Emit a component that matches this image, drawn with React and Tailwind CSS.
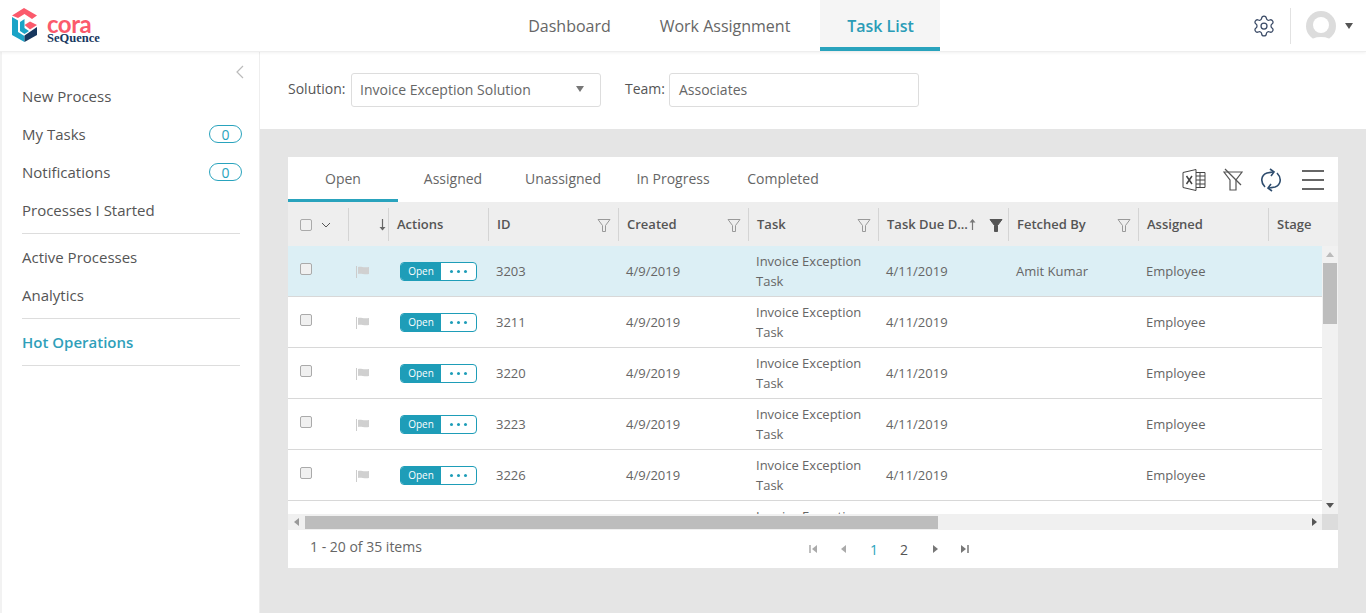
import { Settings } from "lucide-react";

const sideTop = [
  { label: "New Process" },
  { label: "My Tasks", badge: 0 },
  { label: "Notifications", badge: 0 },
  { label: "Processes I Started" },
];

const columns = [
  { label: "ID", width: "w-[130px]" },
  { label: "Created", width: "w-[130px]" },
  { label: "Task", width: "w-[130px]" },
  { label: "Task Due D...", width: "w-[130px]", sorted: true },
  { label: "Fetched By", width: "w-[130px]" },
  { label: "Assigned", width: "w-[130px]", noFilter: true },
  { label: "Stage", width: "w-[53px]", noFilter: true, last: true },
];

const rows = [
  { id: "3203", fetched: "Amit Kumar", selected: true },
  { id: "3211" },
  { id: "3220" },
  { id: "3223" },
  { id: "3226" },
  { id: "3229" },
];

function Logo() {
  return (
    <div className="flex items-center ml-3 gap-[10px]">
      <svg width="25" height="34" viewBox="0 0 25 34" className="mb-[2px]">
        <path d="M0 7.5 L12 0 L25 7.5 L20 11 L12.5 6 L6 10 Z" fill="#fb5a6c" />
        <path d="M0 9 L6 12.5 L6 24 L12.5 28 L12.5 34 L0 27 Z" fill="#1ba3c6" />
        <path d="M12.5 27.5 L25 19 L25 27 L12.5 34 Z" fill="#17375e" />
        <path d="M12.5 17 L18 13.5 L25 17 L18 21.5 Z" fill="#fb5a6c" />
        <path d="M12.5 20 L17 23 L12.5 26 L8 23 L8 14 L12.5 11 Z" fill="#1ba3c6" />
      </svg>
      <div className="flex flex-col pt-[9px]">
        <span className="font-['Lato',sans-serif] font-bold text-[24px] tracking-[-0.5px] leading-[16px] text-[#fb5a6c]">cora</span>
        <span className="font-['Liberation_Serif',serif] font-bold text-[12.5px] leading-[13px] text-[#17375e]">SeQuence</span>
      </div>
    </div>
  );
}

function Avatar() {
  return (
    <svg width="30" height="30" viewBox="0 0 30 30" className="ml-[15px]">
      <circle cx="15" cy="15" r="15" fill="#dcdcdc" />
      <circle cx="15" cy="14" r="8" fill="#fff" />
      <ellipse cx="15" cy="31" rx="11" ry="5" fill="#fff" />
    </svg>
  );
}

function Funnel({ filled }) {
  return (
    <svg width="14" height="15" viewBox="0 0 14 15">
      <path
        d="M1 1.5 H13 L8.5 7.5 V13.5 H5.5 V7.5 Z"
        fill={filled ? "#555" : "none"}
        stroke={filled ? "#555" : "#999"}
        strokeWidth="1"
      />
    </svg>
  );
}

function Flag() {
  return (
    <svg width="14" height="12" viewBox="0 0 14 12">
      <path d="M0.5 0 V12" stroke="#ccc" strokeWidth="1" />
      <path d="M2 1 C5 0 7 2 13 1 V8 C8 9 5 7 2 8 Z" fill="#d0d0d0" />
    </svg>
  );
}

function Checkbox() {
  return <span className="block w-[12px] h-[12px] rounded-[2px] border border-[#aaa] bg-[#f0f0f0]" />;
}

function Caret({ dir, color = "#777" }) {
  const d = { left: "M6 0 V8 L1 4 Z", right: "M1 0 V8 L6 4 Z" }[dir];
  return (
    <svg width="7" height="8" viewBox="0 0 7 8">
      <path d={d} fill={color} />
    </svg>
  );
}

function EdgeCaret({ dir, color }) {
  return (
    <svg width="9" height="8" viewBox="0 0 9 8">
      {dir === "left" ? (
        <>
          <path d="M1 0 V8" stroke={color} strokeWidth="1.5" />
          <path d="M8 0 V8 L3 4 Z" fill={color} />
        </>
      ) : (
        <>
          <path d="M8 0 V8" stroke={color} strokeWidth="1.5" />
          <path d="M1 0 V8 L6 4 Z" fill={color} />
        </>
      )}
    </svg>
  );
}

function ToolIcons() {
  return (
    <div className="flex items-center gap-[17px] pr-[14px]">
      <svg width="24" height="24" viewBox="0 0 24 24" fill="none" stroke="#444" strokeWidth="1">
        <path d="M1 4.5 L14 1.5 V22.5 L1 19.5 Z" />
        <path d="M14 4.5 H23 V19.5 H14 M14 8 H23 M14 12 H23 M14 16 H23 M18 4.5 V19.5" />
        <path d="M4.5 8 L10 16 M10 8 L4.5 16" strokeWidth="1.5" />
      </svg>
      <svg width="20" height="24" viewBox="0 0 20 24" fill="none" stroke="#555" strokeWidth="1.2">
        <path d="M1 4 H19 L13 12 V22 H7 V12 Z" />
        <path d="M2 1 L18 17" stroke="#555" />
      </svg>
      <svg width="22" height="24" viewBox="0 0 22 24" fill="none" stroke="#2f4d6e" strokeWidth="1.6">
        <path d="M5 19 C0 14 1 7 7 5 L13 4" />
        <path d="M10 1 L14 4 L11 8" />
        <path d="M17 5 C22 10 21 17 15 19 L9 20" />
        <path d="M12 23 L8 20 L11 16" />
      </svg>
      <div className="ml-[3px] flex flex-col gap-[7px] w-[22px]">
        <span className="block h-[2px] bg-[#666]" />
        <span className="block h-[2px] bg-[#666]" />
        <span className="block h-[2px] bg-[#666]" />
      </div>
    </div>
  );
}

function HeaderCell({ col }) {
  return (
    <div className={`${col.width} shrink-0 h-full py-[5px]`}>
      <div className={`h-full flex items-center pl-2 ${col.sorted ? "pr-[5px]" : "pr-[7px]"} ${col.last ? "" : "border-r border-[#d4d4d4]"}`}>
        <span className="font-semibold text-[13px] text-[#555] whitespace-nowrap">{col.label}</span>
        {col.sorted && (
          <svg width="7" height="11" viewBox="0 0 7 11" className="ml-[1px]">
            <path d="M3.5 2 V11" stroke="#777" strokeWidth="1.2" />
            <path d="M0.5 3.5 H6.5 L3.5 0 Z" fill="#777" />
          </svg>
        )}
        {!col.noFilter && (
          <span className="ml-auto pt-[2px]">
            <Funnel filled={col.sorted} />
          </span>
        )}
      </div>
    </div>
  );
}

function Row({ row }) {
  return (
    <div
      className={`flex h-[51px] shrink-0 items-center border-b border-[#d8d8d8] text-[13px] text-[#666] ${
        row.selected ? "bg-[#dceff5]" : "bg-white"
      }`}
    >
      <div className="w-[60px] shrink-0 pl-3 pb-[4px]">
        <Checkbox />
      </div>
      <div className="w-[40px] shrink-0 pl-[8px] pt-[2px]">
        <Flag />
      </div>
      <div className="w-[100px] shrink-0 pl-3">
        <div className="flex w-[77px] h-[19px] rounded-[4px] border border-[#1e9db8] overflow-hidden bg-white">
          <span className="w-[40px] bg-[#1e9db8] text-white text-[10px] font-medium flex items-center justify-center">
            Open
          </span>
          <span className="flex-1 flex items-center justify-center gap-[4px]">
            <i className="w-[3px] h-[3px] rounded-full bg-[#1e9db8]" />
            <i className="w-[3px] h-[3px] rounded-full bg-[#1e9db8]" />
            <i className="w-[3px] h-[3px] rounded-full bg-[#1e9db8]" />
          </span>
        </div>
      </div>
      <div className="w-[130px] shrink-0 pl-2 pt-[2px]">{row.id}</div>
      <div className="w-[130px] shrink-0 pl-2 pt-[2px]">4/9/2019</div>
      <div className="w-[130px] shrink-0 pl-2 leading-[20px]">Invoice Exception Task</div>
      <div className="w-[130px] shrink-0 pl-2 pt-[2px]">4/11/2019</div>
      <div className="w-[130px] shrink-0 pl-2 pt-[2px]">{row.fetched}</div>
      <div className="w-[130px] shrink-0 pl-2 pt-[2px]">Employee</div>
    </div>
  );
}

export default function App() {
  return (
    <div className="h-[613px] w-[1366px] overflow-hidden flex flex-col bg-[#e5e5e5] font-['Open_Sans',sans-serif]">
      {/* Top nav */}
      <header className="h-[52px] shrink-0 bg-white flex items-center border-b border-[#eee] shadow-[0_1px_3px_rgba(0,0,0,0.06)] relative z-10">
        <div className="w-[500px] shrink-0">
          <Logo />
        </div>
        <nav className="flex h-full text-[16px] text-[#666]">
          <span className="w-[134px] ml-[2px] pl-[1px] flex items-center justify-center">Dashboard</span>
          <span className="w-[184px] pr-[6px] flex items-center justify-center">Work Assignment</span>
          <span className="w-[120px] pl-[1px] bg-[#f5f5f5] border-b-[4px] border-[#29a3bd] text-[#2a9cb7] font-semibold flex items-center justify-center pt-[4px]">
            Task List
          </span>
        </nav>
        <div className="ml-auto flex items-center h-full pr-[4px]">
          <Settings size={24} strokeWidth={1.25} className="text-[#3a4a66]" />
          <span className="ml-[14px] w-px h-[36px] bg-[#e2e2e2]" />
          <Avatar />
          <span className="ml-[9px] mr-[9px] w-0 h-0 border-x-[4px] border-x-transparent border-t-[6px] border-t-[#555]" />
        </div>
      </header>

      <div className="flex flex-1 min-h-0">
        {/* Sidebar */}
        <aside className="w-[260px] shrink-0 bg-white border-l-2 border-[#f2f2f2] border-r border-r-[#eee] text-[15px] text-[#555]">
          <div className="h-[25px] flex justify-end items-start pt-[13px] pr-[15px]">
            <svg width="8" height="14" viewBox="0 0 8 14" fill="none" stroke="#bbb" strokeWidth="1.2" className="shrink-0">
              <path d="M7 1 L1 7 L7 13" />
            </svg>
          </div>
          <div className="pl-5 pr-[19px]">
            <ul className="border-b border-[#ddd] pb-[4px]">
              {sideTop.map((item) => (
                <li key={item.label} className="h-[38px] flex items-center justify-between">
                  {item.label}
                  {item.badge !== undefined && (
                    <span className="w-[33px] h-[18px] rounded-full border border-[#29a3bd] text-[#29a3bd] text-[14px] flex items-center justify-center mr-[-2px]">
                      {item.badge}
                    </span>
                  )}
                </li>
              ))}
            </ul>
            <ul className="border-b border-[#ddd] pt-[4px] pb-[4px]">
              <li className="h-[38px] flex items-center">Active Processes</li>
              <li className="h-[38px] flex items-center">Analytics</li>
            </ul>
            <div className="h-[47px] border-b border-[#ddd] flex items-center font-semibold text-[#2f9fba]">Hot Operations</div>
          </div>
        </aside>

        <main className="flex-1 min-w-0 flex flex-col">
          {/* Filter bar */}
          <div className="h-[77px] shrink-0 bg-white flex items-start pt-[21px] pl-7 text-[14px] text-[#555]">
            <span className="mt-[5px] mr-[5px] w-[58px] whitespace-nowrap">Solution:</span>
            <div className="w-[250px] h-[34px] border border-[#ddd] rounded-[3px] flex items-center justify-between pl-2 pr-[16px] pb-[2px] text-[#666]">
              Invoice Exception Solution
              <span className="w-0 h-0 border-x-[4px] border-x-transparent border-t-[6px] border-t-[#777]" />
            </div>
            <span className="ml-[24px] mt-[5px] mr-[4px]">Team:</span>
            <div className="w-[250px] h-[34px] border border-[#ddd] rounded-[3px] flex items-center pl-[9px] pb-[2px] text-[#666]">
              Associates
            </div>
          </div>

          {/* Grid card */}
          <section className="mt-7 ml-7 w-[1050px] h-[411px] bg-white flex flex-col">
            <div className="h-[46px] shrink-0 flex items-center justify-between border-b border-[#eee]">
              <div className="flex h-full text-[14px] text-[#666]">
                <span className="w-[110px] h-full border-b-[3px] border-[#29a3bd] flex items-center justify-center">Open</span>
                <span className="w-[110px] h-full pb-[3px] flex items-center justify-center">Assigned</span>
                <span className="w-[110px] h-full pb-[3px] flex items-center justify-center">Unassigned</span>
                <span className="w-[110px] h-full pb-[3px] flex items-center justify-center">In Progress</span>
                <span className="w-[110px] h-full pb-[3px] flex items-center justify-center">Completed</span>
              </div>
              <ToolIcons />
            </div>

            <div className="h-[43px] shrink-0 flex items-center bg-[#eee] overflow-hidden">
              <div className="w-[61px] shrink-0 h-full py-[5px]">
                <div className="h-full flex items-center pl-3 gap-[9px] border-r border-[#d4d4d4]">
                  <Checkbox />
                  <svg width="10" height="6" viewBox="0 0 10 6" fill="none" stroke="#555" strokeWidth="1">
                    <path d="M1 1 L5 5 L9 1" />
                  </svg>
                </div>
              </div>
              <div className="w-[40px] shrink-0 h-full py-[5px]">
                <div className="h-full flex items-center justify-end pr-[2px] border-r border-[#d4d4d4] text-[#666]">
                  <svg width="7" height="12" viewBox="0 0 7 12">
                    <path d="M3.5 0 V9" stroke="#666" strokeWidth="1.2" />
                    <path d="M0.5 8 H6.5 L3.5 11.5 Z" fill="#666" />
                  </svg>
                </div>
              </div>
              <div className="w-[100px] shrink-0 h-full py-[5px]">
                <div className="h-full flex items-center pl-2 border-r border-[#d4d4d4] font-semibold text-[13px] text-[#555]">
                  Actions
                </div>
              </div>
              {columns.map((col) => (
                <HeaderCell key={col.label} col={col} />
              ))}
            </div>

            <div className="flex h-[268px] shrink-0">
              <div className="flex-1 min-w-0 flex flex-col overflow-hidden">
                {rows.map((row) => (
                  <Row key={row.id} row={row} />
                ))}
              </div>
              <div className="w-[16px] shrink-0 bg-[#f1f1f1] flex flex-col items-center pt-[6px] pb-[6px]">
                <span className="w-0 h-0 border-x-[4px] border-x-transparent border-b-[5px] border-b-[#bbb]" />
                <span className="mt-[6px] w-[14px] h-[61px] bg-[#bdbdbd]" />
                <span className="mt-auto w-0 h-0 border-x-[4px] border-x-transparent border-t-[5px] border-t-[#555]" />
              </div>
            </div>

            <div className="h-[16px] shrink-0 flex items-center bg-[#f0f0f0]">
              <div className="w-[17px] flex justify-center">
                <span className="w-0 h-0 border-y-[4px] border-y-transparent border-r-[5px] border-r-[#999]" />
              </div>
              <span className="w-[633px] h-[13px] bg-[#bdbdbd]" />
              <div className="ml-auto flex items-center h-full">
                <span className="w-0 h-0 border-y-[4px] border-y-transparent border-l-[5px] border-l-[#555] mr-[5px]" />
                <span className="w-[16px] h-full bg-[#dcdcdc]" />
              </div>
            </div>

            <footer className="flex-1 flex items-center pl-[22px] text-[14px] text-[#666]">
              <span className="pb-[5px]">1 - 20 of 35 items</span>
              <div className="ml-[387px] flex items-center">
                <span className="w-[9px] flex"><EdgeCaret dir="left" color="#aaa" /></span>
                <span className="ml-[22px] flex"><Caret dir="left" color="#aaa" /></span>
                <span className="ml-[23px] text-[#29a3bd]">1</span>
                <span className="ml-[22px] text-[#555]">2</span>
                <span className="ml-[24px] flex"><Caret dir="right" /></span>
                <span className="ml-[21px] flex"><EdgeCaret dir="right" color="#777" /></span>
              </div>
            </footer>
          </section>
        </main>
      </div>
    </div>
  );
}
